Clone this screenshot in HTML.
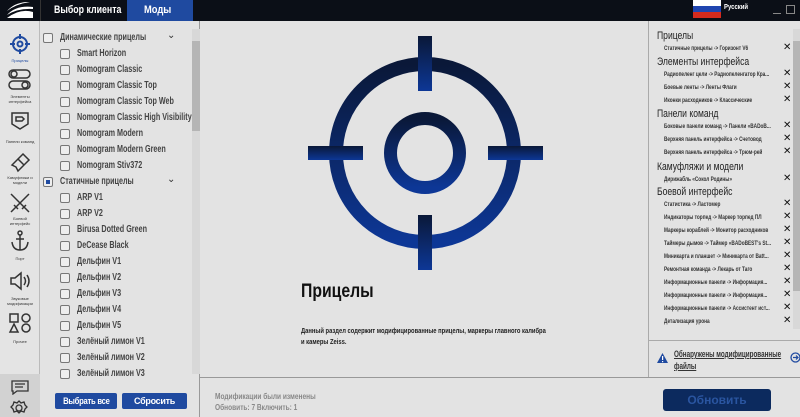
<!DOCTYPE html>
<html><head><meta charset="utf-8"><style>
*{margin:0;padding:0;box-sizing:border-box}
body{width:800px;height:417px;overflow:hidden;background:#e3e3e3;font-family:"Liberation Sans",sans-serif;position:relative;color:#333}
.abs{position:absolute}
.n{transform-origin:0 0;white-space:nowrap}
#top{left:0;top:0;width:800px;height:21px;background:#0b0f17}
.tab{top:0;height:21px;color:#fff;font-size:11px;font-weight:bold;line-height:21px;white-space:nowrap;overflow:hidden}
#side{left:0;top:21px;width:40px;height:396px;background:#e4e4e4;border-right:1px solid #bbb}
.sl{position:absolute;left:0;width:40px;text-align:center;font-size:4px;line-height:5px;color:#333}
#list{left:41px;top:21px;width:159px;height:396px;background:#e3e3e3;border-right:1px solid #999}
.row{position:absolute;font-size:10px;font-weight:bold;color:#444;white-space:nowrap;transform:scaleX(.72);transform-origin:0 0}
.cb{position:absolute;width:10px;height:10px;border:1px solid #777;border-radius:2px;background:#eee}
.btn{position:absolute;background:#1f4aa0;color:#fff;font-size:9px;font-weight:bold;text-align:center;line-height:16px;border-radius:2px;letter-spacing:-0.3px}
#right{left:648px;top:21px;width:152px;height:356px;border-left:1px solid #aaa}
.rh{position:absolute;left:8px;font-size:11px;color:#222;white-space:nowrap;transform:scaleX(.78);transform-origin:0 0}
.ri{position:absolute;left:15px;font-size:6.5px;font-weight:bold;color:#333;white-space:nowrap;transform:scaleX(.73);transform-origin:0 0}
.x{position:absolute;left:134px;font-size:10px;color:#111}
</style></head><body>
<div id="top" class="abs"></div>
<svg class="abs" style="left:6px;top:2px" width="28" height="17"><path d="M1 16 L27 16 L27 10 Q14 6 1 16Z" fill="#fff"/><path d="M1 13 Q10 3 27 5 L27 7 Q12 6 1 13Z" fill="#fff"/><path d="M1 9 Q8 1 20 0 L24 0 Q10 2 1 9Z" fill="#fff"/></svg>
<div class="abs" style="left:40px;top:0;width:1px;height:21px;background:#333"></div>
<div class="tab abs" style="left:54px;width:72px"><span class="n" style="display:inline-block;transform:scaleX(.8)">Выбор клиента</span></div>
<div class="tab abs" style="left:127px;width:66px;background:#1f4aa0;text-align:center"><span class="n" style="display:inline-block;transform:scaleX(.85)">Моды</span></div>
<div class="abs" style="left:693px;top:0;width:28px;height:6px;background:#fff"></div>
<div class="abs" style="left:693px;top:6px;width:28px;height:6px;background:#1f45b0"></div>
<div class="abs" style="left:693px;top:12px;width:28px;height:6px;background:#d52b1e"></div>
<div class="abs n" style="left:724px;top:4px;color:#fff;font-size:7px;font-weight:bold;transform:scaleX(.85)">Русский</div>
<div class="abs" style="left:773px;top:13px;width:8px;height:1px;background:#888"></div>
<div class="abs" style="left:786px;top:5px;width:9px;height:9px;border:1px solid #888"></div>

<div id="side" class="abs">
<svg class="abs" style="left:9px;top:12px" width="22" height="22" fill="none" stroke="#1f4aa0" stroke-width="2"><circle cx="11" cy="11" r="7"/><circle cx="11" cy="11" r="2.5"/><path d="M11 1v5M11 16v5M1 11h5M16 11h5"/></svg>
<div class="sl" style="top:37px;color:#1f4aa0">Прицелы</div>
<svg class="abs" style="left:8px;top:47px" width="24" height="24" fill="none" stroke="#333" stroke-width="1.5"><rect x="1" y="2" width="21" height="8" rx="4"/><rect x="1" y="13" width="21" height="8" rx="4"/><circle cx="6" cy="6" r="3"/><circle cx="17" cy="17" r="3"/></svg>
<div class="sl" style="top:73px">Элементы<br>интерфейса</div>
<svg class="abs" style="left:10px;top:90px" width="20" height="20" fill="none" stroke="#333" stroke-width="1.5"><path d="M2 2h16v11l-8 5-8-5z"/><path d="M6 6h6l2 2-2 2H6z"/></svg>
<div class="sl" style="top:118px">Панели команд</div>
<svg class="abs" style="left:9px;top:131px" width="22" height="22" fill="none" stroke="#333" stroke-width="1.5"><path d="M14 2l6 6-5 5-6-6zM9 7l-6 6 4 2 2 4 6-6"/></svg>
<div class="sl" style="top:154px">Камуфляжи и<br>модели</div>
<svg class="abs" style="left:9px;top:171px" width="22" height="22" fill="none" stroke="#333" stroke-width="1.5"><path d="M2 2l18 18M20 2L2 20M5 13l4 4M13 17l4-4"/></svg>
<div class="sl" style="top:195px">Боевой<br>интерфейс</div>
<svg class="abs" style="left:10px;top:209px" width="20" height="22" fill="none" stroke="#333" stroke-width="1.5"><circle cx="10" cy="3" r="2"/><path d="M10 5v15M2 12q1 8 8 8 7 0 8-8M6 9h8"/></svg>
<div class="sl" style="top:235px">Порт</div>
<svg class="abs" style="left:9px;top:249px" width="22" height="22" fill="none" stroke="#333" stroke-width="1.5"><path d="M2 8h4l6-5v16l-6-5H2z"/><path d="M15 7q3 4 0 8M18 5q4 6 0 12"/></svg>
<div class="sl" style="top:275px">Звуковые<br>модификации</div>
<svg class="abs" style="left:8px;top:291px" width="24" height="22" fill="none" stroke="#333" stroke-width="1.5"><rect x="2" y="2" width="8" height="8"/><circle cx="18" cy="6" r="4"/><path d="M6 12l4 8H2z"/><circle cx="18" cy="16" r="4"/></svg>
<div class="sl" style="top:318px">Прочее</div>
<div class="abs" style="left:0;top:353px;width:40px;height:43px;background:#d2d2d2"></div>
<svg class="abs" style="left:10px;top:358px" width="20" height="16" fill="none" stroke="#333" stroke-width="1.3"><path d="M2 2h16v10H7l-4 3v-3H2z M5 5h10M5 8h8"/></svg>
<svg class="abs" style="left:10px;top:379px" width="18" height="16" fill="none" stroke="#333" stroke-width="1.3"><circle cx="9" cy="8" r="3"/><path d="M9 1l2 2 3-1 1 3 2 2-2 2-1 3-3-1-2 2-2-2-3 1-1-3-2-2 2-2 1-3 3 1z"/></svg>
</div>

<div id="list" class="abs">
<div class="abs" style="left:151px;top:8px;width:8px;height:345px;background:#d8d8d8"></div>
<div class="abs" style="left:151px;top:20px;width:8px;height:90px;background:#b5b5b5"></div>
</div>
<div class="cb" style="left:43px;top:33px"></div><div class="row" style="left:60px;top:32px">Динамические прицелы</div><div class="abs" style="left:167px;top:30px;font-size:10px">⌄</div>
<div class="cb" style="left:60px;top:49px"></div><div class="row" style="left:77px;top:48px">Smart Horizon</div>
<div class="cb" style="left:60px;top:65px"></div><div class="row" style="left:77px;top:64px">Nomogram Classic</div>
<div class="cb" style="left:60px;top:81px"></div><div class="row" style="left:77px;top:80px">Nomogram Classic Top</div>
<div class="cb" style="left:60px;top:97px"></div><div class="row" style="left:77px;top:96px">Nomogram Classic Top Web</div>
<div class="cb" style="left:60px;top:113px"></div><div class="row" style="left:77px;top:112px">Nomogram Classic High Visibility</div>
<div class="cb" style="left:60px;top:129px"></div><div class="row" style="left:77px;top:128px">Nomogram Modern</div>
<div class="cb" style="left:60px;top:145px"></div><div class="row" style="left:77px;top:144px">Nomogram Modern Green</div>
<div class="cb" style="left:60px;top:161px"></div><div class="row" style="left:77px;top:160px">Nomogram Stiv372</div>
<div class="cb" style="left:43px;top:177px;padding:2px"><div style="width:4px;height:4px;background:#1f4aa0"></div></div><div class="row" style="left:60px;top:176px">Статичные прицелы</div><div class="abs" style="left:167px;top:174px;font-size:10px">⌄</div>
<div class="cb" style="left:60px;top:193px"></div><div class="row" style="left:77px;top:192px">ARP V1</div>
<div class="cb" style="left:60px;top:209px"></div><div class="row" style="left:77px;top:208px">ARP V2</div>
<div class="cb" style="left:60px;top:225px"></div><div class="row" style="left:77px;top:224px">Birusa Dotted Green</div>
<div class="cb" style="left:60px;top:241px"></div><div class="row" style="left:77px;top:240px">DeCease Black</div>
<div class="cb" style="left:60px;top:257px"></div><div class="row" style="left:77px;top:256px">Дельфин V1</div>
<div class="cb" style="left:60px;top:273px"></div><div class="row" style="left:77px;top:272px">Дельфин V2</div>
<div class="cb" style="left:60px;top:289px"></div><div class="row" style="left:77px;top:288px">Дельфин V3</div>
<div class="cb" style="left:60px;top:305px"></div><div class="row" style="left:77px;top:304px">Дельфин V4</div>
<div class="cb" style="left:60px;top:321px"></div><div class="row" style="left:77px;top:320px">Дельфин V5</div>
<div class="cb" style="left:60px;top:337px"></div><div class="row" style="left:77px;top:336px">Зелёный лимон V1</div>
<div class="cb" style="left:60px;top:353px"></div><div class="row" style="left:77px;top:352px">Зелёный лимон V2</div>
<div class="cb" style="left:60px;top:369px"></div><div class="row" style="left:77px;top:368px">Зелёный лимон V3</div>
<div class="btn" style="left:55px;top:393px;width:62px"><span class="n" style="display:inline-block;transform:scaleX(.85);transform-origin:50% 0">Выбрать все</span></div>
<div class="btn" style="left:122px;top:393px;width:65px">Сбросить</div>

<svg class="abs" style="left:200px;top:21px" width="448" height="260">
<defs><linearGradient id="g" x1="0" y1="0" x2="0" y2="1"><stop offset="0" stop-color="#0a1838"/><stop offset="1" stop-color="#0d3796"/></linearGradient></defs>
<g fill="none" stroke="url(#g)"><circle cx="225" cy="132" r="89" stroke-width="14"/><circle cx="225" cy="132" r="34.5" stroke-width="13"/></g>
<g fill="url(#g)"><rect x="218" y="15" width="14" height="55"/><rect x="218" y="194" width="14" height="55"/><rect x="108" y="125" width="55" height="14"/><rect x="288" y="125" width="55" height="14"/></g>
</svg>
<div class="abs n" style="left:301px;top:281px;font-size:19px;font-weight:bold;color:#111;transform:scaleX(.83)">Прицелы</div>
<div class="abs n" style="left:301px;top:326px;font-size:7px;font-weight:bold;color:#222;line-height:11px;transform:scaleX(.83)">Данный раздел содержит модифицированные прицелы, маркеры главного калибра<br>и камеры Zeiss.</div>
<div class="abs" style="left:200px;top:377px;width:600px;height:1px;background:#999"></div>
<div class="abs n" style="left:215px;top:391px;font-size:8px;font-weight:bold;color:#888;line-height:11px;transform:scaleX(.82)">Модификации были изменены<br>Обновить: 7 Включить: 1</div>

<div id="right" class="abs">
<div class="abs" style="left:144px;top:8px;width:8px;height:300px;background:#d8d8d8"></div>
<div class="abs" style="left:144px;top:20px;width:8px;height:250px;background:#b5b5b5"></div>
<div class="rh" style="top:9px">Прицелы</div>
<div class="ri" style="top:24px">Статичные прицелы -> Горизонт V6</div><div class="x" style="top:21px">✕</div>
<div class="rh" style="top:35px">Элементы интерфейса</div>
<div class="ri" style="top:50px">Радиопеленг цели -> Радиопеленгатор Кра...</div><div class="x" style="top:47px">✕</div>
<div class="ri" style="top:63px">Боевые ленты -> Ленты Флаги</div><div class="x" style="top:60px">✕</div>
<div class="ri" style="top:76px">Иконки расходников -> Классические</div><div class="x" style="top:73px">✕</div>
<div class="rh" style="top:87px">Панели команд</div>
<div class="ri" style="top:102px">Боковые панели команд -> Панели «BADoB...</div><div class="x" style="top:99px">✕</div>
<div class="ri" style="top:115px">Верхняя панель интерфейса -> Счетовод</div><div class="x" style="top:112px">✕</div>
<div class="ri" style="top:128px">Верхняя панель интерфейса -> Трюм-рей</div><div class="x" style="top:125px">✕</div>
<div class="rh" style="top:140px">Камуфляжи и модели</div>
<div class="ri" style="top:155px">Дирижабль «Сокол Родины»</div><div class="x" style="top:152px">✕</div>
<div class="rh" style="top:165px">Боевой интерфейс</div>
<div class="ri" style="top:180px">Статистика -> Ластомер</div><div class="x" style="top:177px">✕</div>
<div class="ri" style="top:193px">Индикаторы торпед -> Маркер торпед ПЛ</div><div class="x" style="top:190px">✕</div>
<div class="ri" style="top:206px">Маркеры кораблей -> Монитор расходников</div><div class="x" style="top:203px">✕</div>
<div class="ri" style="top:219px">Таймеры дымов -> Таймер «BADoBEST's St...</div><div class="x" style="top:216px">✕</div>
<div class="ri" style="top:232px">Миникарта и планшет -> Миникарта от Batt...</div><div class="x" style="top:229px">✕</div>
<div class="ri" style="top:245px">Ремонтная команда -> Лекарь от Таго</div><div class="x" style="top:242px">✕</div>
<div class="ri" style="top:258px">Информационные панели -> Информация...</div><div class="x" style="top:255px">✕</div>
<div class="ri" style="top:271px">Информационные панели -> Информация...</div><div class="x" style="top:268px">✕</div>
<div class="ri" style="top:284px">Информационные панели -> Ассистент ист...</div><div class="x" style="top:281px">✕</div>
<div class="ri" style="top:297px">Детализация урона</div><div class="x" style="top:294px">✕</div>
<div class="abs" style="left:0;top:319px;width:152px;height:1px;background:#aaa"></div>
<svg class="abs" style="left:8px;top:332px" width="11" height="10"><path d="M5.5 0L11 10H0z" fill="#1f4aa0"/><rect x="5" y="3" width="1.2" height="4" fill="#fff"/><rect x="5" y="8" width="1.2" height="1.2" fill="#fff"/></svg>
<div class="abs n" style="left:25px;top:327px;font-size:9px;font-weight:bold;color:#333;text-decoration:underline;line-height:12px;transform:scaleX(.7)">Обнаружены модифицированные<br>файлы</div>
<svg class="abs" style="left:141px;top:331px" width="11" height="11"><circle cx="5.5" cy="5.5" r="4.5" fill="none" stroke="#1f4aa0" stroke-width="1.3"/><path d="M3 5.5h5M6 3.5l2 2-2 2" fill="none" stroke="#1f4aa0" stroke-width="1.2"/></svg>
</div>
<div class="abs" style="left:663px;top:389px;width:108px;height:22px;background:#0c2a5e;border-radius:3px;color:#2a55a0;font-size:12px;font-weight:bold;text-align:center;line-height:22px">Обновить</div>
</body></html>
